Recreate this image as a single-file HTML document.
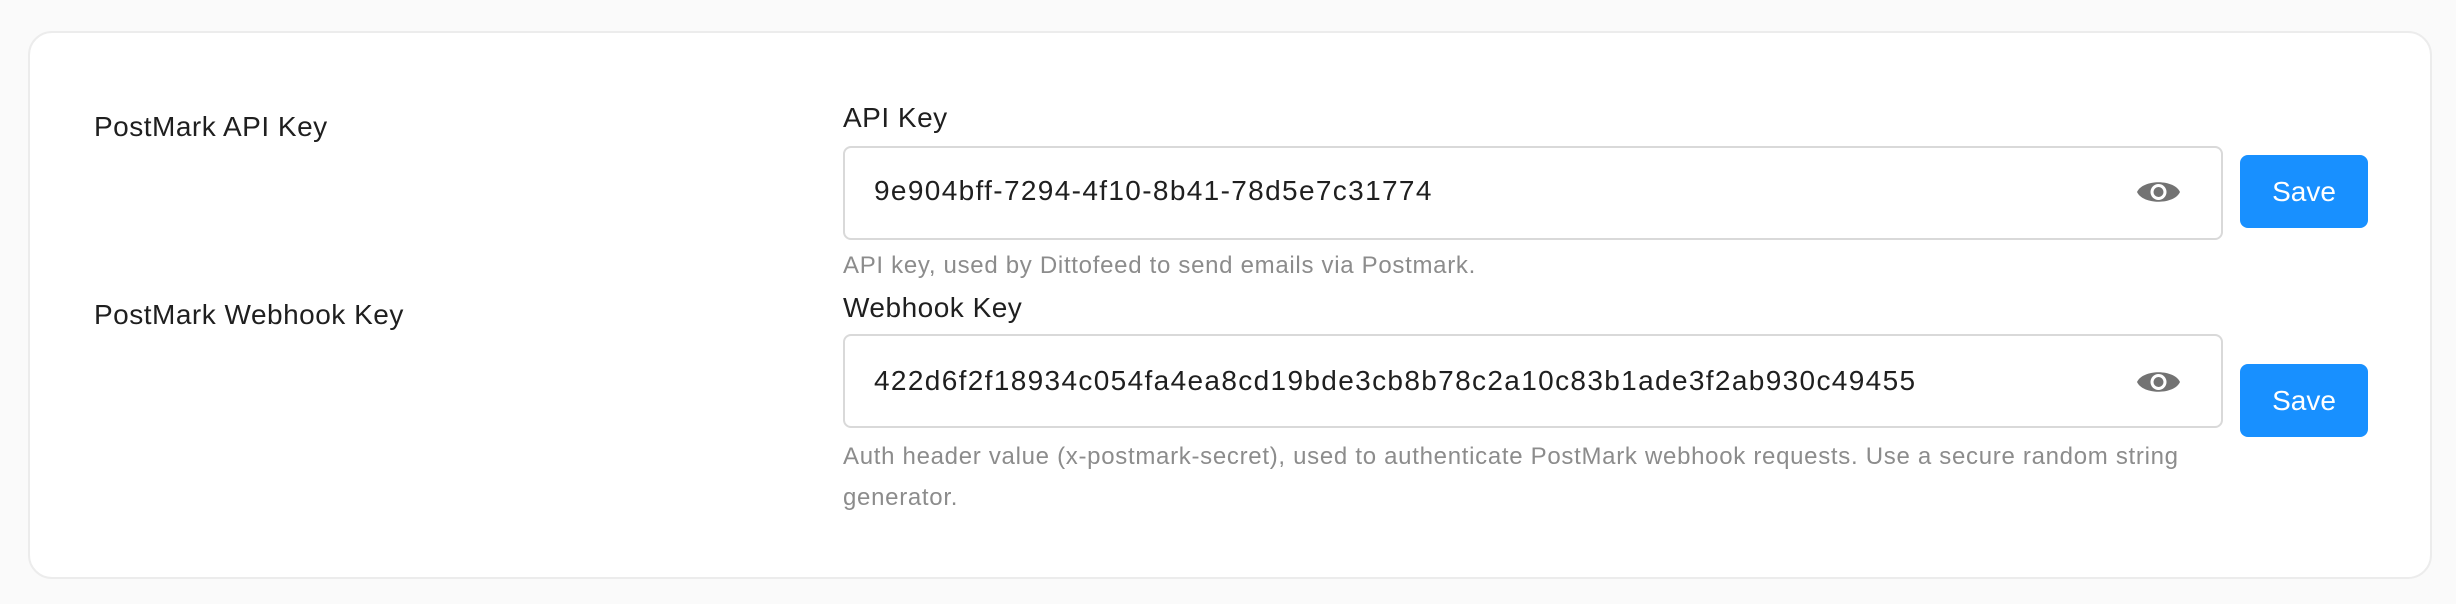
<!DOCTYPE html>
<html><head><meta charset="utf-8"><style>
*{margin:0;padding:0;box-sizing:border-box}
body{width:2456px;height:604px;background:#fafafa;font-family:"Liberation Sans",sans-serif;position:relative;overflow:hidden}
.card{position:absolute;left:28px;top:31px;width:2404px;height:548px;background:#fff;border:2px solid #ececec;border-radius:24px}
.t{position:absolute;white-space:nowrap;line-height:1}
.lbl{font-size:28px;color:#1f1f1f;letter-spacing:0.5px}
.inp{position:absolute;left:843px;width:1380px;height:94px;border:2px solid #d9d9d9;border-radius:8px;background:#fff}
.val{font-size:28px;color:#1f1f1f;letter-spacing:1.35px}
.help{font-size:24px;color:#8c8c8c;letter-spacing:0.7px}
.btn{position:absolute;left:2240px;width:128px;height:73px;background:#1890ff;border-radius:8px;color:#fff;font-size:28px;display:flex;align-items:center;justify-content:center}
.eye{position:absolute;left:2136px;width:45px;height:24px}
</style></head><body>
<div class="card"></div>
<div class="t lbl" style="left:94px;top:113px">PostMark API Key</div>
<div class="t lbl" style="left:94px;top:301px">PostMark Webhook Key</div>

<div class="t lbl" style="left:843px;top:104px">API Key</div>
<div class="inp" style="top:146px"></div>
<div class="t val" style="left:874px;top:177px">9e904bff-7294-4f10-8b41-78d5e7c31774</div>
<svg class="eye" style="top:180px" viewBox="0 0 45 24"><path d="M1 12C7 -1 38 -1 44 12C38 25 7 25 1 12Z" fill="#737373"/><circle cx="22.5" cy="12" r="8" fill="#fff"/><circle cx="22.5" cy="12" r="5" fill="#737373"/></svg>
<div class="btn" style="top:155px">Save</div>
<div class="t help" style="left:843px;top:254px">API key, used by Dittofeed to send emails via Postmark.</div>

<div class="t lbl" style="left:843px;top:294px">Webhook Key</div>
<div class="inp" style="top:334px"></div>
<div class="t val" style="left:874px;top:367px">422d6f2f18934c054fa4ea8cd19bde3cb8b78c2a10c83b1ade3f2ab930c49455</div>
<svg class="eye" style="top:370px" viewBox="0 0 45 24"><path d="M1 12C7 -1 38 -1 44 12C38 25 7 25 1 12Z" fill="#737373"/><circle cx="22.5" cy="12" r="8" fill="#fff"/><circle cx="22.5" cy="12" r="5" fill="#737373"/></svg>
<div class="btn" style="top:364px">Save</div>
<div class="t help" style="left:843px;top:445px">Auth header value (x-postmark-secret), used to authenticate PostMark webhook requests. Use a secure random string</div>
<div class="t help" style="left:843px;top:486px">generator.</div>
</body></html>
